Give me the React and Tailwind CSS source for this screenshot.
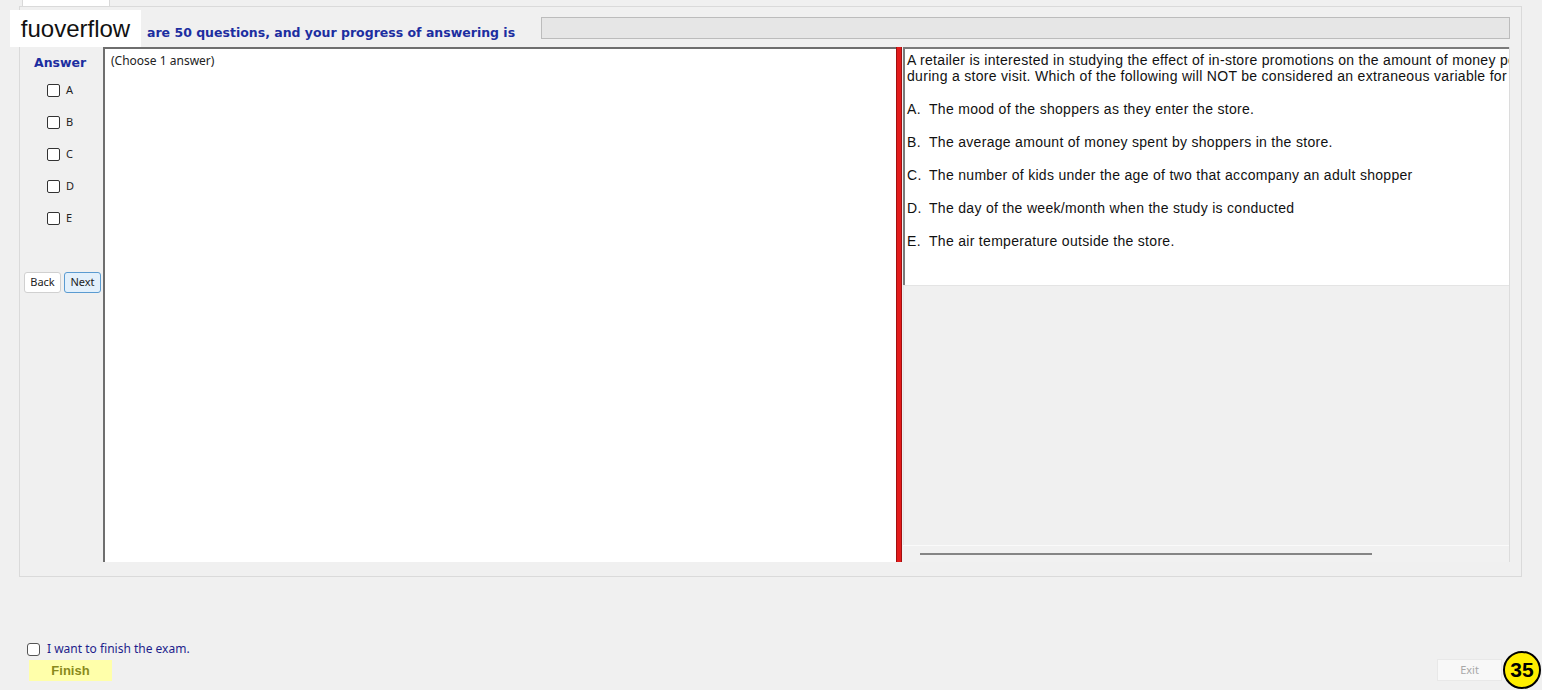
const OPTIONS = ['A', 'B', 'C', 'D', 'E'];

const ANSWERS = [
  ['A.', 'The mood of the shoppers as they enter the store.'],
  ['B.', 'The average amount of money spent by shoppers in the store.'],
  ['C.', 'The number of kids under the age of two that accompany an adult shopper'],
  ['D.', 'The day of the week/month when the study is conducted'],
  ['E.', 'The air temperature outside the store.'],
];

const ARIAL = { fontFamily: '"Liberation Sans", Arial, sans-serif' };
const VERDANA = { fontFamily: '"DejaVu Sans", Verdana, sans-serif' };

function Box({ className = '' }) {
  return <span className={`inline-block h-[13px] w-[13px] rounded-[2px] border border-[#333] bg-white ${className}`} />;
}

function AnswerColumn() {
  return (
    <div className="flex w-[79px] shrink-0 flex-col pt-[8px]">
      <div className="pl-[10px] text-[12.5px] font-bold leading-[16px] text-[#1c2ea0]" style={VERDANA}>
        Answer
      </div>
      <div className="mt-[3px] flex flex-col">
        {OPTIONS.map((o) => (
          <label key={o} className="flex h-[32px] items-center gap-[6px] pl-[23px] text-[11px] text-[#222]">
            <Box />
            <span>{o}</span>
          </label>
        ))}
      </div>
      <div className="mt-[38px] flex gap-[3px]">
        <button className="h-[21px] w-[37px] rounded-[3px] border border-[#d0d0d0] bg-white text-[11px] text-[#222]">
          Back
        </button>
        <button className="h-[21px] w-[37px] rounded-[3px] border border-[#5a9bd1] bg-[#e3f0fb] text-[11px] text-[#222]">
          Next
        </button>
      </div>
    </div>
  );
}

function QuestionPanel() {
  return (
    <div className="ml-[1px] flex min-w-0 flex-1 flex-col border-r border-[#dcdcdc]">
      <div className="h-[238px] overflow-hidden whitespace-nowrap border-l-2 border-t-2 border-[#7b7b7b] bg-white pl-[2px] pt-[3px] text-[14px] leading-[16px] tracking-[0.3px] text-[#111]" style={ARIAL}>
        <div>A retailer is interested in studying the effect of in-store promotions on the amount of money people spend</div>
        <div>during a store visit. Which of the following will NOT be considered an extraneous variable for this study?</div>
        <div className="mt-[17px] flex flex-col gap-[17px]">
          {ANSWERS.map(([k, t]) => (
            <div key={k} className="flex">
              <span className="w-[22px]">{k}</span>
              <span>{t}</span>
            </div>
          ))}
        </div>
      </div>
      <div className="flex-1 border-l border-t border-[#e4e4e4] bg-[#f0f0f0]" />
      <div className="flex h-[17px] items-center border-t border-[#fafafa] bg-[#f1f1f1]">
        <div className="ml-[17px] h-[2px] w-[452px] bg-[#858585]" />
      </div>
    </div>
  );
}

export default function App() {
  return (
    <div className="relative flex h-[690px] w-[1542px] flex-col overflow-hidden bg-[#f0f0f0]" style={{ fontFamily: '"Noto Sans", "Open Sans", sans-serif' }}>
      <div className="flex h-[6px] pl-[22px]">
        <div className="w-[88px] border-x border-[#d9d9d9] bg-white" />
      </div>

      <div className="ml-[19px] flex h-[571px] w-[1503px] flex-col border border-[#dadada] pl-[4px] pr-[11px]">
        <div className="flex h-[40px] items-start">
          <span className="ml-[123px] mt-[18px] w-[378px] shrink-0 whitespace-nowrap text-[12.5px] font-bold leading-[16px] text-[#1c2ea0]" style={VERDANA}>
            are 50 questions, and your progress of answering is
          </span>
          <div className="ml-[16px] mt-[10px] h-[22px] flex-1 border border-[#bcbcbc] bg-[#e6e6e6]" />
        </div>

        <div className="flex h-[515px]">
          <AnswerColumn />
          <div className="w-[793px] shrink-0 border-l-2 border-t-2 border-[#6e6e6e] bg-white pl-[6px] pt-[4px] text-[12px] leading-[16px] text-[#222]">
            (Choose 1 answer)
          </div>
          <div className="w-[6px] shrink-0 border-x border-[#a01010] bg-[#e31b1b]" />
          <QuestionPanel />
        </div>
      </div>

      <div className="flex flex-1 items-end justify-between pb-[9px] pl-[27px] pr-[40px]">
        <div className="flex flex-col">
          <label className="flex items-center gap-[7px] text-[12px] leading-[16px] text-[#1e1e8c]">
            <Box className="h-[12px] w-[12px] rounded-[3px] border-[#555]" />
            <span>I want to finish the exam.</span>
          </label>
          <button className="ml-[2px] mt-[3px] h-[21px] w-[83px] bg-[#ffffaa] text-[13px] font-bold text-[#8a8a1c]" style={ARIAL}>
            Finish
          </button>
        </div>
        <button className="h-[22px] w-[65px] border border-[#e8e8e8] bg-[#f8f8f8] text-[11px] text-[#a8a8a8]">
          Exit
        </button>
      </div>

      <div className="absolute left-[10px] top-[10px] flex h-[37px] w-[131px] items-center justify-center bg-white text-[24px] text-[#111]" style={ARIAL}>
        fuoverflow
      </div>

      <div className="absolute bottom-[1px] right-[1px] flex h-[38px] w-[38px] items-center justify-center rounded-full border-2 border-black bg-[#ffee00] text-[21px] font-bold text-black" style={ARIAL}>
        35
      </div>
    </div>
  );
}
